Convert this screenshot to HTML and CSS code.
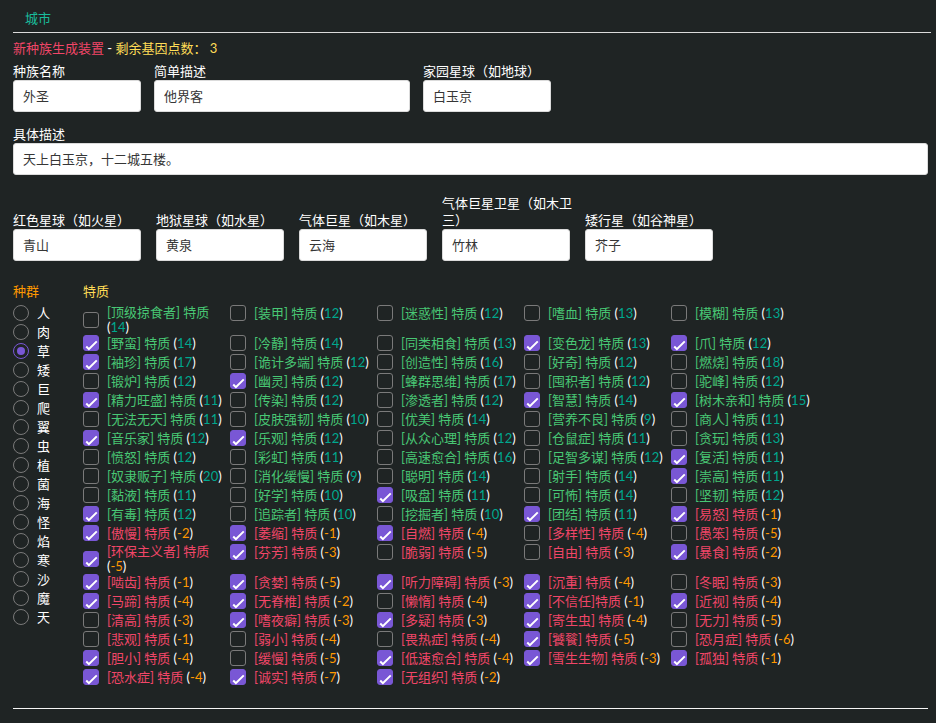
FILE: index.html
```html
<!DOCTYPE html>
<html lang="zh-CN">
<head>
<meta charset="utf-8">
<title>新种族生成装置</title>
<link rel="stylesheet" href="styles.css">
</head>
<body>
<nav class="tabs"><a class="tab" href="#city">城市</a></nav>
<main class="lab" id="city">
  <h1 class="title"><span class="danger">新种族生成装置</span> - <span class="caution">剩余基因点数： 3</span></h1>
  <form>
    <div class="fields">
      <div class="field"><label for="name">种族名称</label><input class="text" id="name" type="text" value="外圣"></div>
      <div class="field wide"><label for="desc">简单描述</label><input class="text" id="desc" type="text" value="他界客"></div>
      <div class="field"><label for="home">家园星球（如地球）</label><input class="text" id="home" type="text" value="白玉京"></div>
    </div>
    <div class="fields">
      <div class="field full"><label for="entity">具体描述</label><input class="text" id="entity" type="text" value="天上白玉京，十二城五楼。"></div>
    </div>
    <div class="fields planets">
      <div class="field"><label for="red">红色星球（如火星）</label><input class="text" id="red" type="text" value="青山"></div>
      <div class="field"><label for="hell">地狱星球（如水星）</label><input class="text" id="hell" type="text" value="黄泉"></div>
      <div class="field"><label for="gas">气体巨星（如木星）</label><input class="text" id="gas" type="text" value="云海"></div>
      <div class="field"><label for="moon">气体巨星卫星（如木卫三）</label><input class="text" id="moon" type="text" value="竹林"></div>
      <div class="field"><label for="dwarf">矮行星（如谷神星）</label><input class="text" id="dwarf" type="text" value="芥子"></div>
    </div>
    <div class="genes">
      <section>
        <h2 class="heading warning">种群</h2>
        <div class="genus" id="genus"></div>
      </section>
      <section class="trait-section">
        <h2 class="heading caution">特质</h2>
        <div class="traits" id="traits"></div>
      </section>
    </div>
  </form>
</main>
<script src="traits.js"></script>
</body>
</html>
```
FILE: styles.css
```css
* {
  box-sizing: border-box;
}

body {
  margin: 0;
  background: #1f2424;
  color: #fff;
  font: 13px/17px Lato, "Noto Sans CJK SC", sans-serif;
}

.tabs {
  display: flex;
  margin: 0 5px 0 13px;
  padding: 10px 12px 5px;
  border-bottom: 1px solid #dbdbdb;
}

.tab {
  color: #1abc9c;
  text-decoration: none;
}

.lab {
  margin: 0 8px 0 13px;
  padding: 7px 0 20px;
  border-bottom: 1px solid #f5f5f5;
}

.title,
.heading {
  margin: 0;
  font-size: 13px;
  font-weight: 400;
}

.title {
  margin-bottom: 6px;
}

.danger {
  color: #f14668;
}

.caution {
  color: #ffdd57;
}

.warning {
  color: #ff9900;
}

.success {
  color: #48c774;
}

.gain {
  color: #00a78e;
}

.fields {
  display: flex;
  align-items: flex-end;
  gap: 13px;
  margin-bottom: 14px;
}

.planets {
  gap: 12px;
  margin-bottom: 22px;
  padding-top: 6px;
}

.field {
  display: flex;
  flex-direction: column;
  width: 128px;
}

.planets .field {
  width: 131px;
}

.field.wide {
  width: 256px;
}

.field.full {
  width: auto;
  flex: 1;
}

.text {
  width: 100%;
  height: 32px;
  padding: 0 9px 2px;
  border: 1px solid #dbdbdb;
  border-radius: 3px;
  background: #fff;
  color: #363636;
  font: inherit;
}

.planets .text {
  width: 128px;
}

.genes {
  display: flex;
  gap: 31px;
}

.heading {
  margin-bottom: 5px;
}

.trait-section {
  flex: 1;
}

.genus,
.traits {
  display: grid;
  grid-auto-rows: minmax(19px, auto);
  align-items: start;
}

.genus {
  width: 39px;
}

.traits {
  grid-template-columns: repeat(auto-fill, 147px);
}

.option {
  display: flex;
  align-items: center;
  gap: 8px;
  line-height: 15px;
}

.check,
.radio {
  appearance: none;
  flex: none;
  width: 16px;
  height: 16px;
  margin: 0;
  border: 1px solid #7a7a7a;
}

.check {
  border-radius: 3px;
}

.check:checked {
  border-color: #7957d5;
  background: #7957d5;
}

.check:checked::before {
  content: "";
  display: block;
  width: 13px;
  height: 13px;
  margin: 3px 0 0 1px;
  background: #fff;
  clip-path: polygon(4% 63%, 15% 52%, 30% 68%, 85% 13%, 96% 23%, 30% 89%);
}

.radio {
  display: grid;
  place-items: center;
  border-radius: 50%;
}

.radio:checked {
  border-color: #7957d5;
}

.radio:checked::before {
  content: "";
  width: 8px;
  height: 8px;
  border-radius: 50%;
  background: #7957d5;
}
```
FILE: traits.js
```js
const genera = [..."人肉草矮巨爬翼虫植菌海怪焰寒沙魔天"];

// Each entry is name:cost, with a leading * for a selected trait.
const traits = `
顶级掠食者:14 装甲:12 迷惑性:12 嗜血:13 模糊:13
*野蛮:14 冷静:14 同类相食:13 *变色龙:13 *爪:12
*袖珍:17 诡计多端:12 创造性:16 好奇:12 燃烧:18
锻炉:12 *幽灵:12 蜂群思维:17 囤积者:12 驼峰:12
*精力旺盛:11 传染:12 渗透者:12 *智慧:14 *树木亲和:15
无法无天:11 皮肤强韧:10 优美:14 营养不良:9 商人:11
*音乐家:12 *乐观:12 从众心理:12 仓鼠症:11 贪玩:13
愤怒:12 彩虹:11 高速愈合:16 足智多谋:12 *复活:11
奴隶贩子:20 消化缓慢:9 聪明:14 射手:14 *崇高:11
黏液:11 好学:10 *吸盘:11 可怖:14 坚韧:12
*有毒:12 追踪者:10 挖掘者:10 *团结:11 *易怒:-1
*傲慢:-2 *萎缩:-1 *自燃:-4 多样性:-4 愚笨:-5
*环保主义者:-5 *芬芳:-3 脆弱:-5 自由:-3 *暴食:-2
*啮齿:-1 *贪婪:-5 *听力障碍:-3 *沉重:-4 冬眠:-3
*马蹄:-4 *无脊椎:-2 懒惰:-4 *不信任:-1 *近视:-4
清高:-3 *嗜夜癖:-3 *多疑:-3 *寄生虫:-4 无力:-5
悲观:-1 弱小:-4 畏热症:-4 *饕餮:-5 恐月症:-6
*胆小:-4 缓慢:-5 *低速愈合:-4 *雪生生物:-3 *孤独:-1
*恐水症:-4 *诚实:-7 *无组织:-2
`.trim().split(/\s+/);

document.getElementById("genus").innerHTML = genera.map(name => `
  <label class="option"><input class="radio" type="radio" name="genus"${name === "草" ? " checked" : ""}><span>${name}</span></label>`).join("");

document.getElementById("traits").innerHTML = traits.map(entry => {
  const checked = entry.startsWith("*");
  const [name, cost] = entry.replace("*", "").split(":");
  const negative = cost < 0;
  const space = name === "不信任" ? "" : " ";
  return `
  <label class="option"><input class="check" type="checkbox"${checked ? " checked" : ""}><span><span class="${negative ? "danger" : "success"}">[${name}]${space}特质</span> (<span class="${negative ? "warning" : "gain"}">${cost}</span>)</span></label>`;
}).join("");
```
